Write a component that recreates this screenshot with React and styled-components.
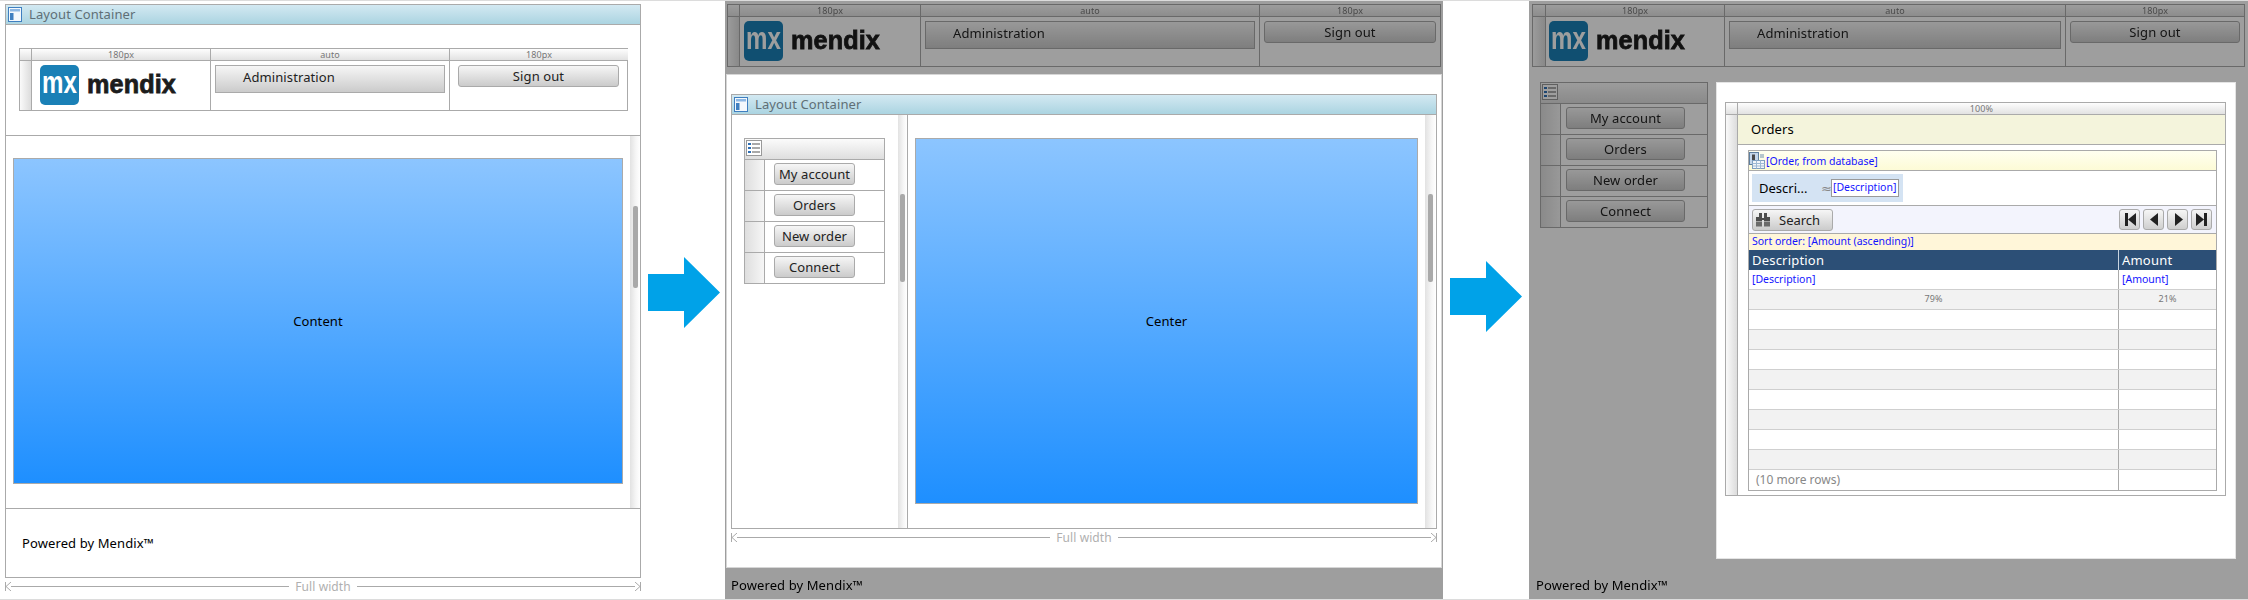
import React from 'react'
import styled, { createGlobalStyle } from 'styled-components'

const UI_FONT = '"Noto Sans", "DejaVu Sans", sans-serif';
const LINE = '#aaaaaa';

const GlobalStyle = createGlobalStyle`
  * { box-sizing: border-box; }
  html, body { margin: 0; padding: 0; background: #fff; }
  body { font-family: ${UI_FONT}; font-size: 13px; color: #000; letter-spacing: 0.1px; }
`;

const Page = styled.div`
  width: 2248px;
  height: 600px;
  display: flex;
  overflow: hidden;
  background: #fff;
  border-top: 1px solid #dcdcdc;
  border-bottom: 1px solid #dcdcdc;
`;

/* first picture: everything is on white */
const FirstStage = styled.div`
  width: 648px;
  flex: none;
  padding: 3px 0 0 5px;
  display: flex;
  flex-direction: column;
`;

const GrayStage = styled.div`
  flex: none;
  width: ${p => p.$width}px;
  height: 598px;
  background: #9e9e9e;
  display: flex;
  flex-direction: column;
`;

/* what the page template gives, greyed out because it's not being edited */
const Dimmed = styled.div`
  filter: brightness(0.62);
`;

const ArrowSlot = styled.div`
  flex: none;
  width: ${p => p.$width}px;
  padding-left: ${p => p.$left}px;
  padding-top: ${p => p.$top}px;
`;

const Frame = styled.div`
  border: 1px solid ${LINE};
  display: flex;
  flex-direction: column;
  background: #fff;
  width: ${p => p.$width}px;
  height: ${p => p.$height}px;
`;

const TitleBar = styled.div`
  flex: none;
  height: 20px;
  display: flex;
  align-items: center;
  gap: 7px;
  padding: 0 0 1px 2px;
  background: linear-gradient(#d3e9f2, #abd4e1);
  border-bottom: 1px solid ${LINE};
  color: #5f6f76;
  font-size: 13px;
`;

const TopSection = styled.div`
  flex: none;
  height: 111px;
  padding: 23px 12px 0 13px;
  border-bottom: 1px solid ${LINE};
`;

const HeadTable = styled.div`
  display: grid;
  grid-template-columns: ${p => p.$cols};
  grid-template-rows: 12px 49px;
  height: 63px;
  border: 1px solid ${LINE};
  background: #fff;
`;

const HeadCell = styled.div`
  border-left: ${p => (p.$first ? 'none' : `1px solid ${LINE}`)};
  border-bottom: 1px solid ${LINE};
  background: linear-gradient(#fdfdfd, #e2e2e2);
  color: #777;
  font-size: 9px;
  line-height: 11px;
  text-align: center;
`;

const SideCell = styled.div`
  background: linear-gradient(90deg, #fafafa, #dcdcdc);
  min-width: 0;
`;

const BodyCell = styled.div`
  border-left: 1px solid ${LINE};
  min-width: 0;
  padding: ${p => p.$pad || '4px'};
`;

const Button = styled.div`
  height: ${p => p.$height || 22}px;
  width: ${p => (p.$width ? `${p.$width}px` : 'auto')};
  display: flex;
  align-items: center;
  justify-content: ${p => (p.$left ? 'flex-start' : 'center')};
  padding: ${p => (p.$left ? '0 0 4px 27px' : '0 0 1px 0')};
  border: 1px solid ${LINE};
  border-radius: ${p => (p.$square ? 0 : 3)}px;
  background: linear-gradient(#f6f6f6, #cbcbcb);
  font-size: 13px;
  color: #222;
  white-space: nowrap;
`;

const MiddleSection = styled.div`
  flex: none;
  height: 373px;
  display: flex;
  border-bottom: 1px solid ${LINE};
`;

const MainArea = styled.div`
  flex: 1;
  min-width: 0;
  display: flex;
  padding: ${p => p.$top || 22}px 7px 24px 7px;
`;

const ContentBox = styled.div`
  flex: 1;
  display: flex;
  align-items: center;
  justify-content: center;
  border: 1px solid ${LINE};
  background: linear-gradient(#8cc5ff, #1e8fff);
  font-size: 13px;
`;

const ScrollTrack = styled.div`
  flex: none;
  width: ${p => p.$width}px;
  display: flex;
  justify-content: center;
  background: linear-gradient(90deg, #e2e2e2, #f6f6f6 60%, #fff);
  border-right: ${p => (p.$divider ? `1px solid ${LINE}` : 'none')};
`;

const ScrollThumb = styled.div`
  width: 5px;
  height: ${p => p.$height}px;
  margin-top: ${p => p.$top}px;
  background: #a9a9a9;
  border-radius: 2px;
`;

const FooterSection = styled.div`
  flex: 1;
  display: flex;
  align-items: center;
  padding: 0 0 0 16px;
`;

const PoweredBy = styled.div`
  font-size: 13px;
  color: #000;
  padding: ${p => p.$pad || 0};
`;

const Ruler = styled.div`
  display: flex;
  align-items: center;
  height: 9px;
  width: ${p => p.$width}px;
  margin-top: 4px;
  color: #b0b0b0;
  font-size: 12px;
`;

const RulerLine = styled.div`
  flex: 1;
  height: 1px;
  background: ${LINE};
`;

const RulerLabel = styled.span`
  padding: 0 6px;
  white-space: nowrap;
`;

const Sheet = styled.div`
  flex: none;
  width: 716px;
  height: 494px;
  margin-left: 1px;
  background: #fff;
  border: 1px solid #d6d6d6;
  padding: 19px 4px 0 4px;
`;

const TemplateHead = styled.div`
  padding: ${p => p.$pad};
`;

const InnerBody = styled.div`
  flex: 1;
  min-height: 0;
  display: flex;
`;

const LeftColumn = styled.div`
  flex: none;
  width: 166px;
  padding: 23px 0 0 12px;
`;

const Menu = styled.div`
  width: ${p => p.$width}px;
  border: 1px solid ${LINE};
  background: #fff;
`;

const MenuHead = styled.div`
  height: 20px;
  padding: 1px 0 0 1px;
  background: linear-gradient(#fbfbfb, #dedede);
`;

const MenuRow = styled.div`
  height: 31px;
  display: flex;
  border-top: 1px solid ${LINE};
`;

const MenuSide = styled.div`
  flex: none;
  width: ${p => p.$width}px;
  background: linear-gradient(90deg, #dedede, #f6f6f6);
  border-right: 1px solid ${LINE};
`;

const MenuCell = styled.div`
  padding: 3px 0 0 ${p => p.$left}px;
`;

const ThirdBody = styled.div`
  display: flex;
  margin-top: 15px;
  padding-left: 11px;
`;

const WhitePanel = styled.div`
  flex: none;
  width: 520px;
  height: 477px;
  margin-left: 8px;
  background: #fff;
  border: 1px solid #e4e4e4;
  padding: 19px 9px 0 8px;
`;

const FormTable = styled.div`
  height: 394px;
  border: 1px solid ${LINE};
  display: grid;
  grid-template-columns: 11px 1fr;
  grid-template-rows: 12px 30px 1fr;
`;

const FormHead = styled(HeadCell)`
  border-left: 1px solid ${LINE};
`;

const OrdersCell = styled.div`
  display: flex;
  align-items: center;
  padding: 0 0 2px 13px;
  border-left: 1px solid ${LINE};
  border-bottom: 1px solid ${LINE};
  background: #f4f4dc;
  font-size: 13px;
`;

const GridCell = styled.div`
  border-left: 1px solid ${LINE};
  padding: 5px 8px 4px 10px;
`;

const DataGrid = styled.div`
  height: 341px;
  border: 1px solid ${LINE};
  display: flex;
  flex-direction: column;
  font-size: 10.5px;
  letter-spacing: 0;
`;

const EntityBar = styled.div`
  flex: none;
  height: 20px;
  display: flex;
  align-items: center;
  gap: 1px;
  color: #1414ff;
  background: linear-gradient(#fffff0, #fdfbd6);
  border-bottom: 1px solid ${LINE};
`;

const SearchBar = styled.div`
  flex: none;
  height: 35px;
  padding: 3px 3px;
  border-bottom: 1px solid ${LINE};
`;

const FilterBox = styled.div`
  width: 151px;
  height: 28px;
  display: flex;
  align-items: center;
  background: #d4e3f3;
  padding-left: 7px;
  font-size: 13px;
`;

const FilterLabel = styled.span`
  width: 62px;
  flex: none;
`;

const FilterOperator = styled.span`
  width: 8px;
  flex: none;
  color: #888;
  font-size: 13px;
`;

const FilterInput = styled.div`
  width: 68px;
  height: 18px;
  margin-left: 2px;
  padding-left: 1px;
  border: 1px solid #999;
  background: #fff;
  color: #1414ff;
  font-size: 10.5px;
  line-height: 15px;
  white-space: nowrap;
`;

const Toolbar = styled.div`
  flex: none;
  height: 28px;
  display: flex;
  align-items: flex-start;
  justify-content: space-between;
  padding: 3px 4px 0 3px;
  background: #f3f4fd;
  border-bottom: 1px solid ${LINE};
`;

const SearchButton = styled(Button)`
  width: 81px;
  gap: 9px;
  justify-content: flex-start;
  padding: 0 0 1px 3px;
`;

const Pager = styled.div`
  display: flex;
  gap: 3px;
`;

const PageButton = styled.div`
  width: 21px;
  height: 21px;
  display: flex;
  align-items: center;
  justify-content: center;
  border: 1px solid ${LINE};
  border-radius: 3px;
  background: linear-gradient(#f6f6f6, #cfcfcf);
`;

const SortBar = styled.div`
  flex: none;
  height: 16px;
  padding-left: 3px;
  line-height: 15px;
  color: #1414ff;
  background: #fff6d9;
`;

const GridRow = styled.div`
  flex: none;
  height: 20px;
  display: grid;
  grid-template-columns: 1fr 98px;
  background: ${p => (p.$shade ? '#f2f2f2' : '#fff')};
  border-bottom: ${p => (p.$last ? 'none' : '1px solid #cfcfcf')};
`;

const HeaderRow = styled(GridRow)`
  background: #2c4f76;
  border-bottom: none;
  color: #fff;
  font-size: 13px;
  letter-spacing: 0.2px;
`;

const GridText = styled.div`
  padding-left: 3px;
  line-height: ${p => p.$lineHeight || 18}px;
  white-space: nowrap;
  color: ${p => p.$color || 'inherit'};
  border-left: ${p => (p.$second ? `1px solid ${p.$line || LINE}` : 'none')};
`;

const WidthText = styled(GridText)`
  padding-left: 0;
  text-align: center;
  color: #777;
  font-size: 9px;
`;

const MoreRows = styled(GridText)`
  padding-left: 7px;
  color: #888;
  font-size: 12px;
`;

const ThirdFooter = styled(Dimmed)`
  margin-top: auto;
  padding: 0 0 5px 7px;
`;

const BigArrow = () => (
  <svg width="72" height="71" viewBox="0 0 72 71">
    <path d="M0 17H36V0L72 35.5L36 71V54H0Z" fill="#00a2e8" />
  </svg>
);

const WindowIcon = () => (
  <svg width="14" height="15" viewBox="0 0 14 15">
    <rect x=".5" y=".5" width="13" height="14" fill="#f4f8fc" stroke="#3f7fc0" />
    <rect x="2" y="2" width="10" height="2.5" fill="#8db8e4" />
    <rect x="2" y="6" width="3.5" height="7" fill="#3f7fc0" />
  </svg>
);

const ListIcon = () => (
  <svg width="16" height="16" viewBox="0 0 16 16">
    <rect x=".5" y=".5" width="15" height="15" fill="#fff" stroke="#999" />
    <g fill="#2f6fb5">
      <rect x="2" y="3" width="3" height="2" />
      <rect x="2" y="7" width="3" height="2" />
      <rect x="2" y="11" width="3" height="2" />
    </g>
    <g fill="#555">
      <rect x="6" y="3.5" width="8" height="1" />
      <rect x="6" y="7.5" width="8" height="1" />
      <rect x="6" y="11.5" width="8" height="1" />
    </g>
  </svg>
);

const GridIcon = () => (
  <svg width="16" height="17" viewBox="0 0 16 17">
    <rect x=".5" y=".5" width="9" height="12" fill="#c4d6ea" stroke="#5f7f9f" />
    <rect x="3" y="2.5" width="3" height="7" fill="#4a4a4a" />
    <rect x="3.5" y="8.5" width="12" height="8" fill="#f2f6fa" stroke="#7f9fbf" />
    <path d="M3.5 11.5H15.5M3.5 14H15.5M7.5 8.5V16.5M11.5 8.5V16.5" stroke="#9fbad4" />
    <path d="M11 3H15M11 5H15" stroke="#6f8faf" />
  </svg>
);

const BinocularsIcon = () => (
  <svg width="14" height="14" viewBox="0 0 14 14" fill="#4d4d4d">
    <rect x="3" y="0" width="3" height="4" />
    <rect x="8" y="0" width="3" height="4" />
    <rect x="0" y="4" width="6" height="4" />
    <rect x="8" y="4" width="6" height="4" />
    <rect x="6" y="5" width="2" height="2" />
    <rect x="0" y="8.5" width="6" height="5" fill="#6a6a6a" />
    <rect x="8" y="8.5" width="6" height="5" fill="#6a6a6a" />
  </svg>
);

const PAGER_SHAPES = [
  'M2 2H5V15H2ZM5 8.5L13 2V15Z',
  'M11 2V15L3 8.5Z',
  'M4 2L12 8.5L4 15Z',
  'M1 2L9 8.5L1 15ZM9 2H12V15H9Z',
];

const RulerEnd = ({ right }) => (
  <svg width="6" height="9" viewBox="0 0 6 9" fill="none" stroke="#aaa">
    {right
      ? <path d="M5.5 0V9M0 0L5 4.5L0 9" />
      : <path d="M.5 0V9M6 0L1 4.5L6 9" />}
  </svg>
);

const FullWidth = ({ width }) => (
  <Ruler $width={width}>
    <RulerEnd />
    <RulerLine />
    <RulerLabel>Full width</RulerLabel>
    <RulerLine />
    <RulerEnd right />
  </Ruler>
);

const Logo = () => (
  <svg width="145" height="40" viewBox="0 0 145 40">
    <rect width="39" height="40" rx="5" fill="#1a80b6" />
    <text x="2" y="28" fontFamily="Liberation Sans" fontWeight="700" fontSize="31" fill="#fff" textLength="35" lengthAdjust="spacingAndGlyphs">mx</text>
    <text x="47" y="28" fontFamily="Liberation Sans" fontWeight="700" fontSize="26" fill="#1c1c1c" stroke="#1c1c1c" strokeWidth=".8" textLength="89" lengthAdjust="spacingAndGlyphs">mendix</text>
  </svg>
);

const Header = ({ cols, logoPad, signPad }) => (
  <HeadTable $cols={cols}>
    <HeadCell $first />
    <HeadCell>180px</HeadCell>
    <HeadCell>auto</HeadCell>
    <HeadCell>180px</HeadCell>
    <SideCell />
    <BodyCell $pad={logoPad}><Logo /></BodyCell>
    <BodyCell><Button $height={28} $square $left>Administration</Button></BodyCell>
    <BodyCell $pad={signPad}><Button>Sign out</Button></BodyCell>
  </HeadTable>
);

const MENU_ITEMS = ['My account', 'Orders', 'New order', 'Connect'];

const SideMenu = ({ width, sideWidth, left, buttonWidth }) => (
  <Menu $width={width}>
    <MenuHead><ListIcon /></MenuHead>
    {MENU_ITEMS.map(item => (
      <MenuRow key={item}>
        <MenuSide $width={sideWidth} />
        <MenuCell $left={left}>
          <Button $width={buttonWidth}>{item}</Button>
        </MenuCell>
      </MenuRow>
    ))}
  </Menu>
);

const EMPTY_ROWS = [false, true, false, true, false, true, false, true];

const OrdersGrid = () => (
  <DataGrid>
    <EntityBar><GridIcon />[Order, from database]</EntityBar>
    <SearchBar>
      <FilterBox>
        <FilterLabel>Descri...</FilterLabel>
        <FilterOperator>≈</FilterOperator>
        <FilterInput>[Description]</FilterInput>
      </FilterBox>
    </SearchBar>
    <Toolbar>
      <SearchButton><BinocularsIcon />Search</SearchButton>
      <Pager>
        {PAGER_SHAPES.map(d => (
          <PageButton key={d}>
            <svg width="14" height="17" viewBox="0 0 14 17"><path d={d} fill="#222" /></svg>
          </PageButton>
        ))}
      </Pager>
    </Toolbar>
    <SortBar>Sort order: [Amount (ascending)]</SortBar>
    <HeaderRow>
      <GridText $lineHeight={21}>Description</GridText>
      <GridText $second $line="#c8d4e0" $lineHeight={21}>Amount</GridText>
    </HeaderRow>
    <GridRow>
      <GridText $color="#1414ff">[Description]</GridText>
      <GridText $second $color="#1414ff">[Amount]</GridText>
    </GridRow>
    <GridRow $shade>
      <WidthText>79%</WidthText>
      <WidthText $second>21%</WidthText>
    </GridRow>
    {EMPTY_ROWS.map((shade, i) => (
      <GridRow key={i} $shade={shade}>
        <GridText />
        <GridText $second />
      </GridRow>
    ))}
    <GridRow $last>
      <MoreRows $lineHeight={20}>(10 more rows)</MoreRows>
      <GridText $second />
    </GridRow>
  </DataGrid>
);

const App = () => (
  <Page>
    <GlobalStyle />

    <FirstStage>
      <Frame $width={636} $height={574}>
        <TitleBar><WindowIcon />Layout Container</TitleBar>
        <TopSection>
          <Header cols="11px 179px 239px 179px" logoPad="4px 0 0 8px" signPad="4px 9px 0 8px" />
        </TopSection>
        <MiddleSection>
          <MainArea><ContentBox>Content</ContentBox></MainArea>
          <ScrollTrack $width={10}><ScrollThumb $height={82} $top={70} /></ScrollTrack>
        </MiddleSection>
        <FooterSection><PoweredBy>Powered by Mendix™</PoweredBy></FooterSection>
      </Frame>
      <FullWidth width={636} />
    </FirstStage>

    <ArrowSlot $width={77} $left={0} $top={256}><BigArrow /></ArrowSlot>

    <GrayStage $width={718}>
      <Dimmed>
        <TemplateHead $pad="3px 2px 7px 2px">
          <Header cols="11px 181px 1fr 181px" logoPad="4px 0 0 4px" signPad="4px 4px 0 4px" />
        </TemplateHead>
      </Dimmed>
      <Sheet>
        <Frame $width={706} $height={435}>
          <TitleBar><WindowIcon />Layout Container</TitleBar>
          <InnerBody>
            <LeftColumn>
              <SideMenu width={141} sideWidth={20} left={9} buttonWidth={81} />
            </LeftColumn>
            <ScrollTrack $width={10} $divider><ScrollThumb $height={88} $top={79} /></ScrollTrack>
            <MainArea $top={23}><ContentBox>Center</ContentBox></MainArea>
            <ScrollTrack $width={11}><ScrollThumb $height={88} $top={79} /></ScrollTrack>
          </InnerBody>
        </Frame>
        <FullWidth width={706} />
      </Sheet>
      <Dimmed>
        <PoweredBy $pad="8px 0 0 6px">Powered by Mendix™</PoweredBy>
      </Dimmed>
    </GrayStage>

    <ArrowSlot $width={86} $left={7} $top={260}><BigArrow /></ArrowSlot>

    <GrayStage $width={719}>
      <Dimmed>
        <TemplateHead $pad="3px 3px 0 3px">
          <Header cols="12px 179px 1fr 179px" logoPad="4px 0 0 3px" signPad="4px 4px 0 4px" />
        </TemplateHead>
      </Dimmed>
      <ThirdBody>
        <Dimmed>
          <SideMenu width={168} sideWidth={20} left={5} buttonWidth={119} />
        </Dimmed>
        <WhitePanel>
          <FormTable>
            <HeadCell $first />
            <FormHead>100%</FormHead>
            <SideCell />
            <OrdersCell>Orders</OrdersCell>
            <SideCell />
            <GridCell><OrdersGrid /></GridCell>
          </FormTable>
        </WhitePanel>
      </ThirdBody>
      <ThirdFooter><PoweredBy>Powered by Mendix™</PoweredBy></ThirdFooter>
    </GrayStage>
  </Page>
);

export default App;
